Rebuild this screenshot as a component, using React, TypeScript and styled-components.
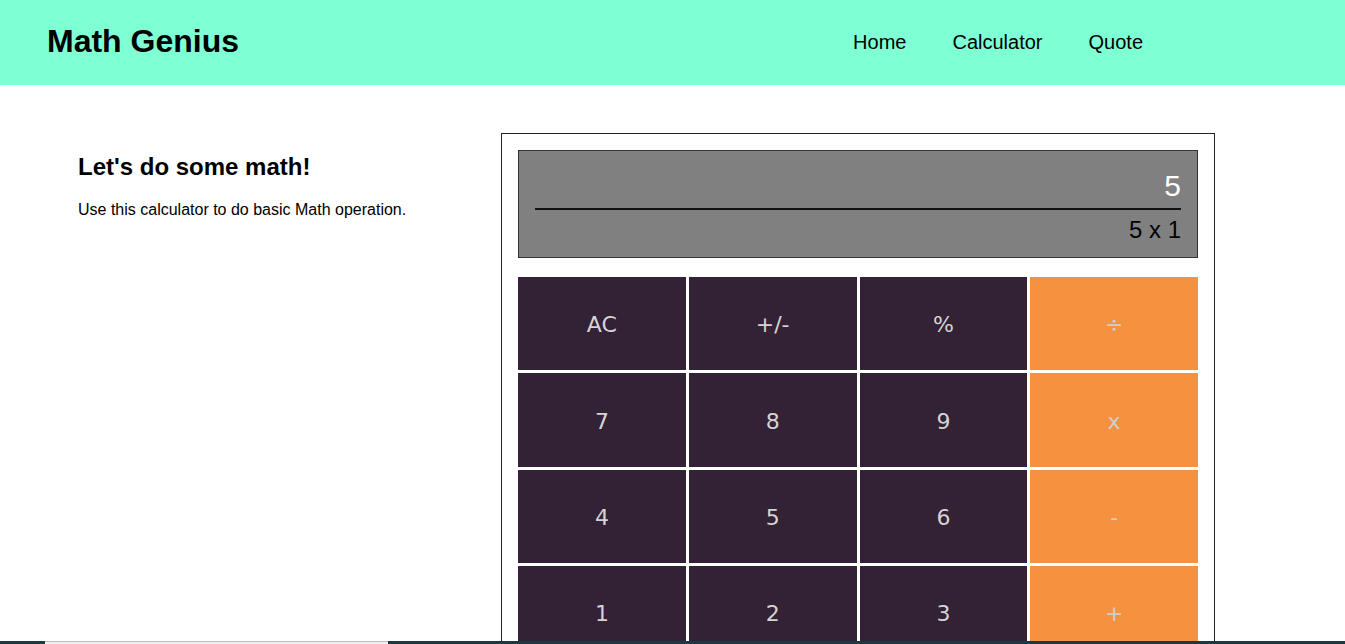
import React from "react";
import styled, { createGlobalStyle } from "styled-components";

const GlobalStyle = createGlobalStyle`
  html, body { margin: 0; padding: 0; background: #ffffff; }
  body { font-family: "Liberation Sans", Arial, sans-serif; color: #000; }
  * { box-sizing: border-box; }
`;

const Header = styled.header`
  height: 85px;
  background: #7fffd4;
  display: flex;
  align-items: center;
  justify-content: space-between;
  padding: 0 202px 0 47px;
`;

const Logo = styled.h1`
  margin: 0;
  padding-bottom: 4px;
  font-size: 32px;
  font-weight: bold;
  line-height: 1;
`;

const Nav = styled.nav`
  display: flex;
  gap: 46px;
  padding-bottom: 1px;
`;

const NavLink = styled.a`
  font-size: 20px;
  color: #000;
  text-decoration: none;
`;

const Main = styled.main`
  display: flex;
  align-items: flex-start;
  padding: 48px 0 0 78px;
`;

const Intro = styled.section`
  width: 423px;
  padding-top: 20px;
`;

const Title = styled.h2`
  margin: 0;
  font-size: 24px;
  font-weight: bold;
  line-height: 28px;
`;

const Lead = styled.p`
  margin: 20px 0 0;
  font-size: 16px;
  line-height: 18px;
`;

const Calculator = styled.section`
  width: 714px;
  border: 1px solid #222;
  padding: 16px 16px 16px;
`;

const Display = styled.div`
  height: 108px;
  background: #808080;
  border: 1px solid #333;
  padding: 18px 16px 0;
  display: flex;
  flex-direction: column;
  align-items: stretch;
`;

const Result = styled.div`
  color: #ffffff;
  font-size: 30px;
  line-height: 34px;
  text-align: right;
`;

const Divider = styled.div`
  height: 2px;
  background: #111;
  margin-top: 5px;
`;

const Expression = styled.div`
  color: #000;
  font-size: 24px;
  line-height: 28px;
  text-align: right;
  margin-top: 6px;
`;

const Keys = styled.div`
  margin-top: 19px;
  display: grid;
  grid-template-columns: repeat(4, 1fr);
  grid-auto-rows: 93.4px;
  gap: 3px;
`;

const Key = styled.button<{ $op?: boolean }>`
  border: none;
  margin: 0;
  padding: 2px 0 0;
  background: ${(p) => (p.$op ? "#f5913f" : "#332236")};
  color: ${(p) => (p.$op ? "#cfcfcf" : "#d4d4d4")};
  font-family: "DejaVu Sans", Verdana, sans-serif;
  font-size: 22px;
  display: flex;
  align-items: center;
  justify-content: center;
  cursor: pointer;
`;

const Footer = styled.footer`
  position: fixed;
  left: 0;
  right: 0;
  bottom: 0;
  height: 3px;
  background: #1e3842;
  display: flex;
`;

const FooterThumb = styled.div`
  margin-left: 45px;
  width: 343px;
  height: 3px;
  background: #efefef;
  border-top: 1px solid #bdbdbd;
`;

const keys: { label: string; op?: boolean }[] = [
  { label: "AC" },
  { label: "+/-" },
  { label: "%" },
  { label: "÷", op: true },
  { label: "7" },
  { label: "8" },
  { label: "9" },
  { label: "x", op: true },
  { label: "4" },
  { label: "5" },
  { label: "6" },
  { label: "-", op: true },
  { label: "1" },
  { label: "2" },
  { label: "3" },
  { label: "+", op: true },
];

export default function App() {
  return (
    <>
      <GlobalStyle />
      <Header>
        <Logo>Math Genius</Logo>
        <Nav>
          <NavLink href="#">Home</NavLink>
          <NavLink href="#">Calculator</NavLink>
          <NavLink href="#">Quote</NavLink>
        </Nav>
      </Header>
      <Main>
        <Intro>
          <Title>Let's do some math!</Title>
          <Lead>Use this calculator to do basic Math operation.</Lead>
        </Intro>
        <Calculator>
          <Display>
            <Result>5</Result>
            <Divider />
            <Expression>5 x 1</Expression>
          </Display>
          <Keys>
            {keys.map((k, i) => (
              <Key key={i} $op={k.op}>
                {k.label}
              </Key>
            ))}
          </Keys>
        </Calculator>
      </Main>
      <Footer>
        <FooterThumb />
      </Footer>
    </>
  );
}
